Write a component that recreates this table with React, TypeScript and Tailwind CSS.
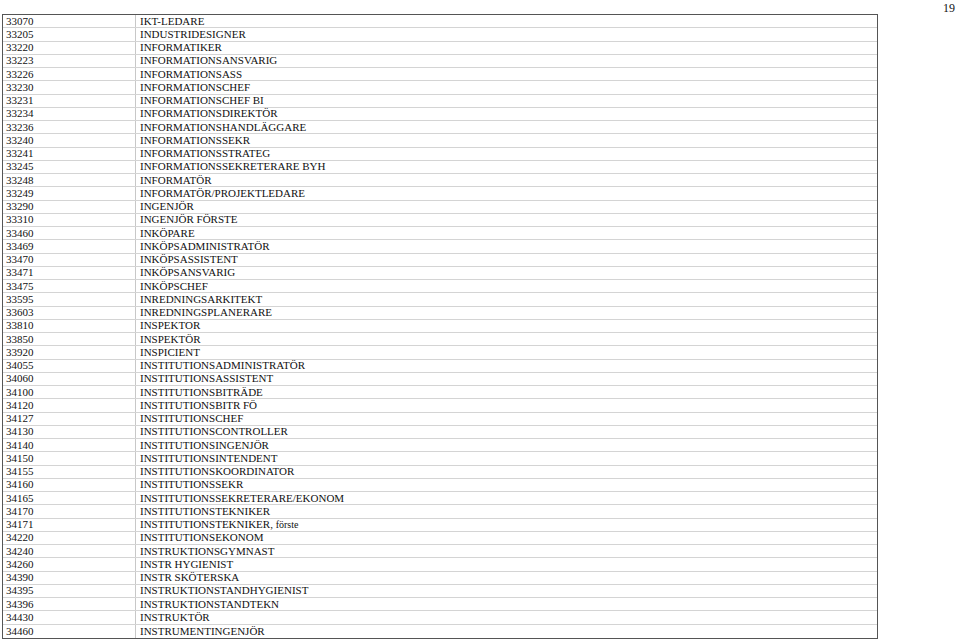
const rows: [string, string][] = [
  ['33070', 'IKT-LEDARE'],
  ['33205', 'INDUSTRIDESIGNER'],
  ['33220', 'INFORMATIKER'],
  ['33223', 'INFORMATIONSANSVARIG'],
  ['33226', 'INFORMATIONSASS'],
  ['33230', 'INFORMATIONSCHEF'],
  ['33231', 'INFORMATIONSCHEF BI'],
  ['33234', 'INFORMATIONSDIREKTÖR'],
  ['33236', 'INFORMATIONSHANDLÄGGARE'],
  ['33240', 'INFORMATIONSSEKR'],
  ['33241', 'INFORMATIONSSTRATEG'],
  ['33245', 'INFORMATIONSSEKRETERARE BYH'],
  ['33248', 'INFORMATÖR'],
  ['33249', 'INFORMATÖR/PROJEKTLEDARE'],
  ['33290', 'INGENJÖR'],
  ['33310', 'INGENJÖR FÖRSTE'],
  ['33460', 'INKÖPARE'],
  ['33469', 'INKÖPSADMINISTRATÖR'],
  ['33470', 'INKÖPSASSISTENT'],
  ['33471', 'INKÖPSANSVARIG'],
  ['33475', 'INKÖPSCHEF'],
  ['33595', 'INREDNINGSARKITEKT'],
  ['33603', 'INREDNINGSPLANERARE'],
  ['33810', 'INSPEKTOR'],
  ['33850', 'INSPEKTÖR'],
  ['33920', 'INSPICIENT'],
  ['34055', 'INSTITUTIONSADMINISTRATÖR'],
  ['34060', 'INSTITUTIONSASSISTENT'],
  ['34100', 'INSTITUTIONSBITRÄDE'],
  ['34120', 'INSTITUTIONSBITR FÖ'],
  ['34127', 'INSTITUTIONSCHEF'],
  ['34130', 'INSTITUTIONSCONTROLLER'],
  ['34140', 'INSTITUTIONSINGENJÖR'],
  ['34150', 'INSTITUTIONSINTENDENT'],
  ['34155', 'INSTITUTIONSKOORDINATOR'],
  ['34160', 'INSTITUTIONSSEKR'],
  ['34165', 'INSTITUTIONSSEKRETERARE/EKONOM'],
  ['34170', 'INSTITUTIONSTEKNIKER'],
  ['34171', 'INSTITUTIONSTEKNIKER, förste'],
  ['34220', 'INSTITUTIONSEKONOM'],
  ['34240', 'INSTRUKTIONSGYMNAST'],
  ['34260', 'INSTR HYGIENIST'],
  ['34390', 'INSTR SKÖTERSKA'],
  ['34395', 'INSTRUKTIONSTANDHYGIENIST'],
  ['34396', 'INSTRUKTIONSTANDTEKN'],
  ['34430', 'INSTRUKTÖR'],
  ['34460', 'INSTRUMENTINGENJÖR'],
]

export default function App() {
  return (
    <div className="w-[960px] h-[639px] bg-white overflow-hidden flex justify-between pl-[2px] pt-[14px] font-['Liberation_Serif',serif] text-[#111]">
      <div className="w-[876px] h-[625px] border border-[#555] flex flex-col">
        {rows.map(([code, title], i) => (
          <div
            key={code}
            className={`flex h-[13.26px] items-center text-[11px] leading-none ${i < rows.length - 1 ? 'border-b border-[#d4d4d4]' : ''}`}
          >
            <div className="w-[133px] h-full flex items-center pl-[3px] border-r border-[#c8c8c8]">{code}</div>
            <div className="flex-1 pl-[4px] whitespace-nowrap">
              {title.endsWith(', förste') ? (
                <>
                  INSTITUTIONSTEKNIKER, <span className="text-[10px]">förste</span>
                </>
              ) : (
                title
              )}
            </div>
          </div>
        ))}
      </div>
      <div className="pr-[5px] -mt-[12px] text-[12px] leading-none">19</div>
    </div>
  )
}
